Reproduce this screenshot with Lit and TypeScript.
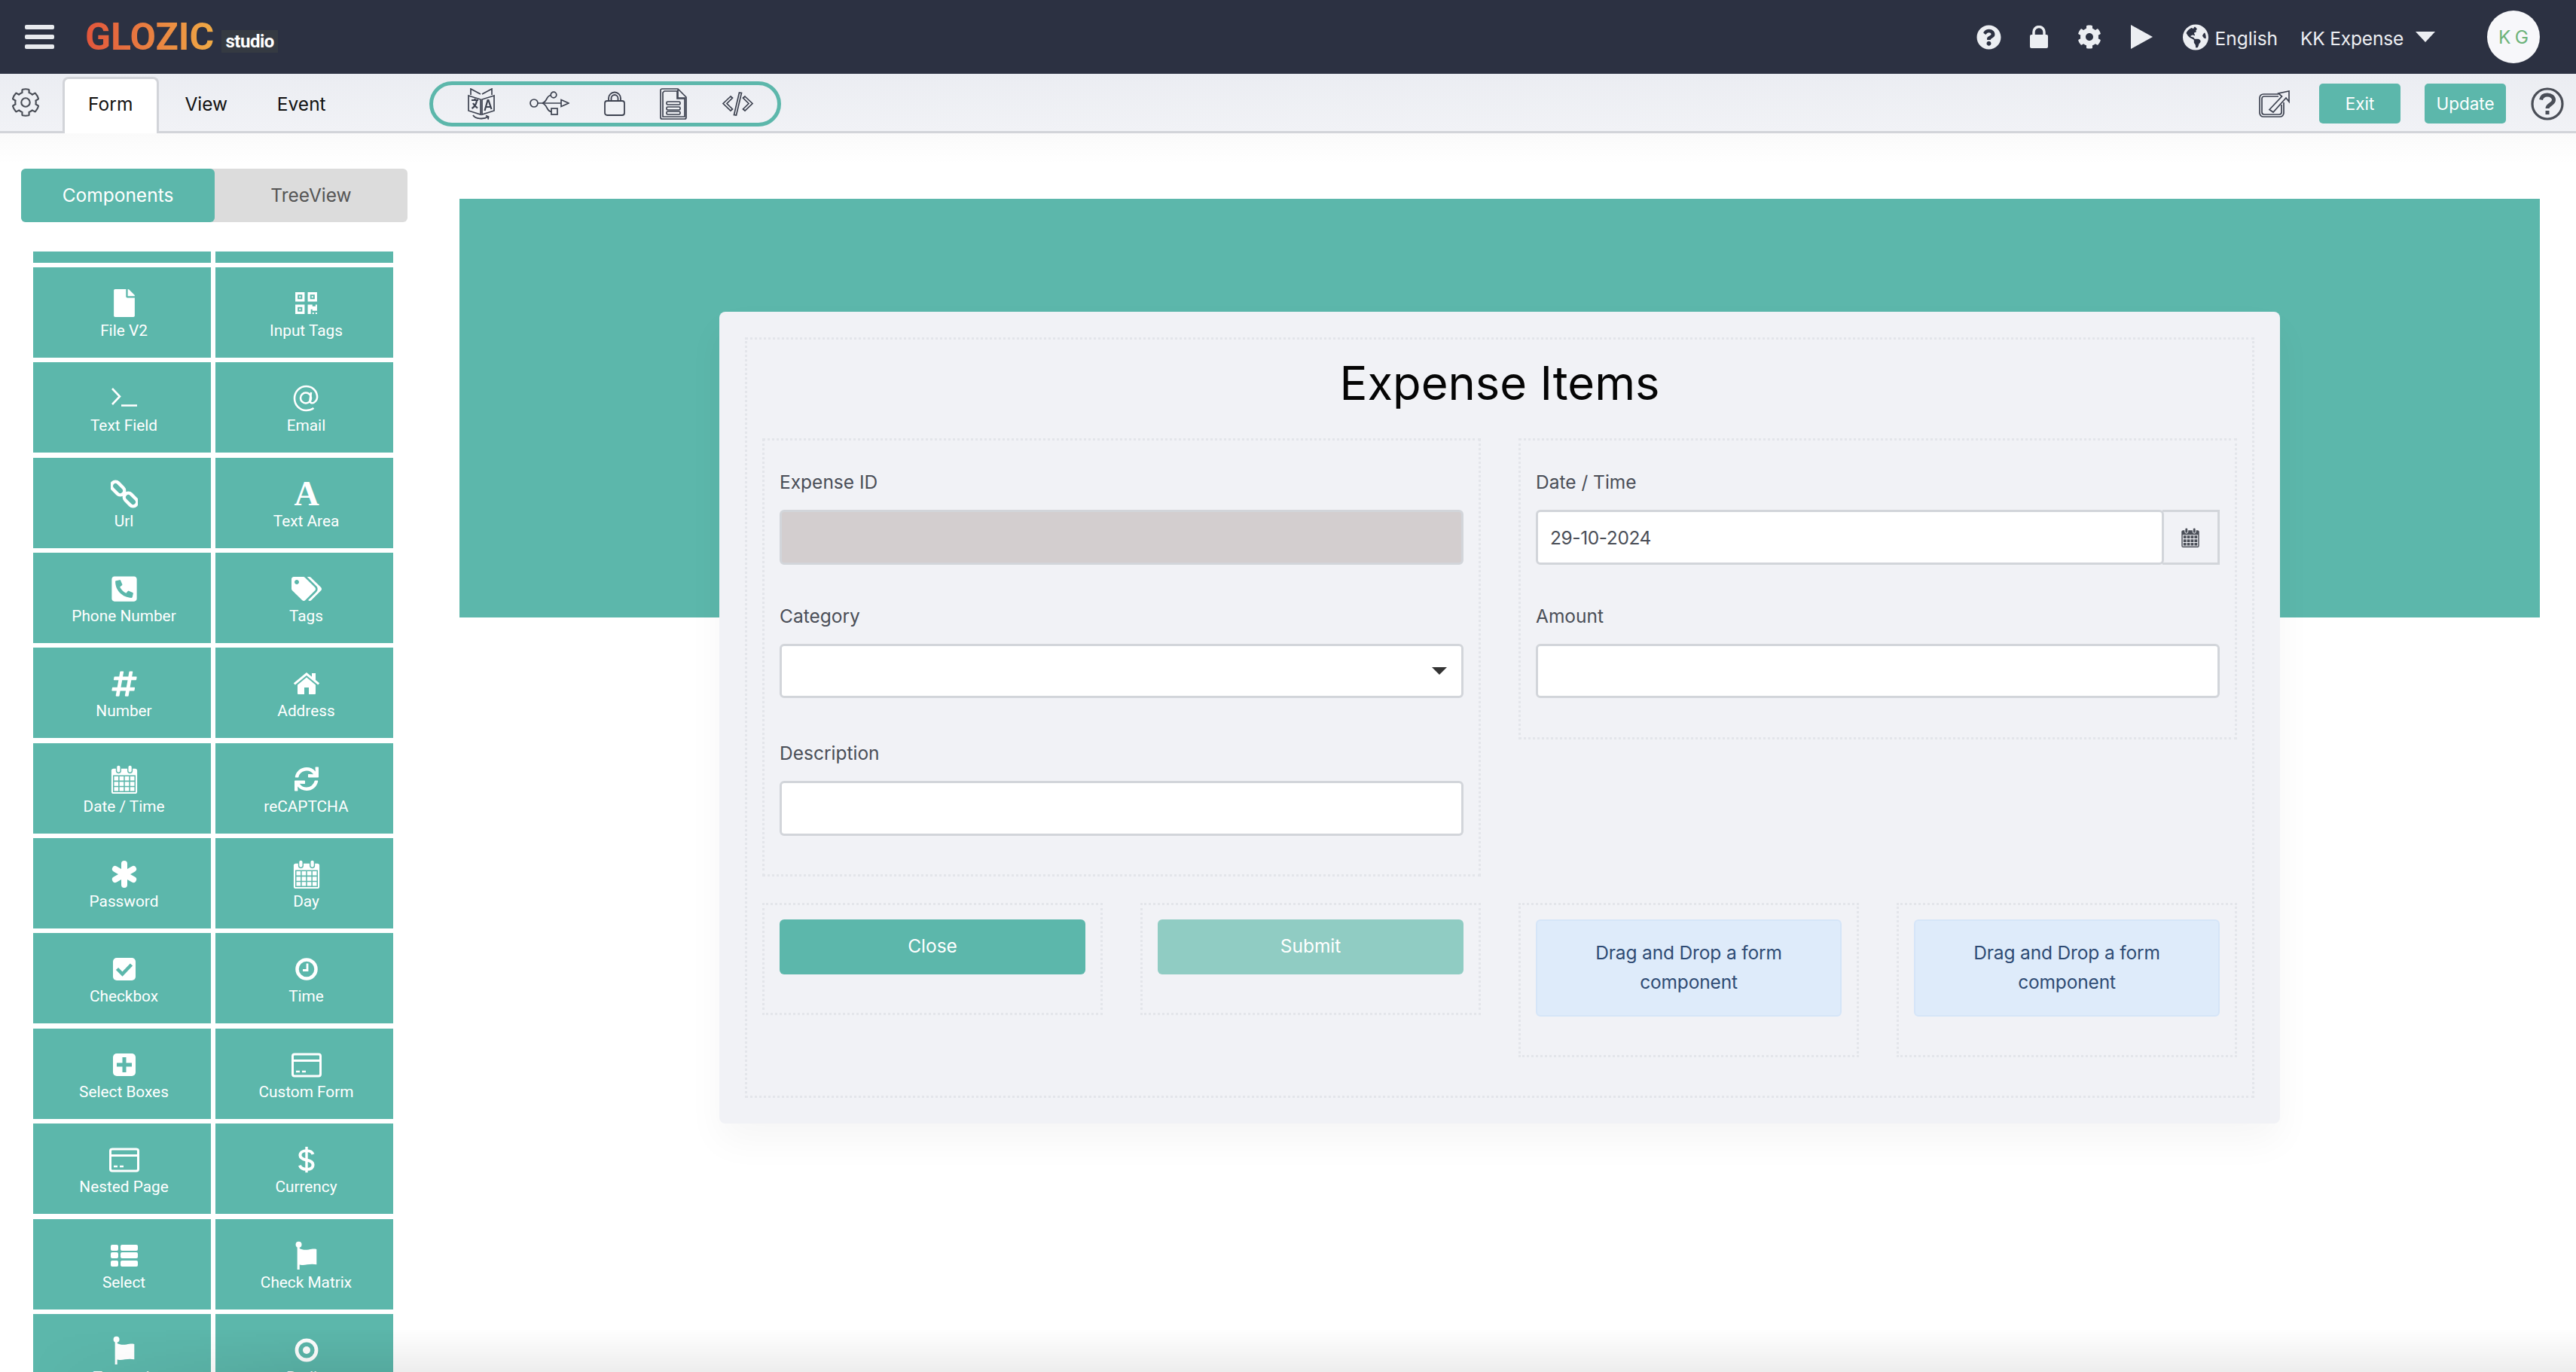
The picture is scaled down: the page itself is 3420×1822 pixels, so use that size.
import { LitElement, html, css, svg } from 'lit'
import { customElement } from 'lit/decorators.js'

const TEAL = '#5cb7ab'

// solid icons share one fill colour, the few cut-outs use --cut
const FILE = svg`<svg viewBox="0 0 384 512"><path d="M224 136V0H24C10.7 0 0 10.7 0 24v464c0 13.3 10.7 24 24 24h336c13.3 0 24-10.7 24-24V160H248c-13.2 0-24-10.8-24-24zm160-14.1v6.1H256V0h6.1c6.4 0 12.5 2.5 17 7l97.9 98c4.5 4.5 7 10.6 7 16.9z"/></svg>`
const QR = svg`<svg viewBox="0 0 448 512"><path d="M0 224h192V32H0v192zM48 80h96v96H48zM80 112h32v32H80zM256 32v192h192V32H256zM400 176h-96V80h96zM336 112h32v32h-32zM0 480h192V288H0v192zM48 336h96v96H48zM80 368h32v32H80zM416 288h32v128h-96v-32h-32v96h-64V288h96v32h64v-32zm0 160h32v32h-32v-32zm-64 0h32v32h-32v-32z" fill-rule="evenodd"/></svg>`
const TERMINAL = svg`<svg viewBox="0 0 36 36" fill="none" stroke="currentColor" stroke-width="2.600"><path d="M2 5l10 10.500L2 26"/><path d="M14 27.500h21"/></svg>`
const AT = svg`<svg viewBox="0 0 36 36" fill="none" stroke="currentColor" stroke-width="2.600"><circle cx="17" cy="17.500" r="7"/><path d="M24 10l-1.500 11c-.3 3 3 4.200 5.500 2.500 3-2 4.500-5.500 4-9C31 7 25 2 17.500 2 9 2 2 9 2 18s7 16 15.500 16c4 0 7-1 10-3"/></svg>`
const LINK = svg`<svg viewBox="0 0 36 36" fill="none" stroke="currentColor" stroke-width="4.400"><rect x="-.5" y="5" width="20" height="11" rx="5.500" transform="rotate(45 9.500 10.500)"/><rect x="16.500" y="20" width="20" height="11" rx="5.500" transform="rotate(45 26.500 25.500)"/></svg>`
const FONT_A = svg`<svg viewBox="0 0 36 36" overflow="visible"><text x="18" y="33" text-anchor="middle" font-family="Liberation Serif" font-weight="700" font-size="46">A</text></svg>`
const PHONE = svg`<svg viewBox="0 0 448 512"><path transform="translate(448 0) scale(-1 1)" d="M400 32H48C21.490 32 0 53.490 0 80v352c0 26.510 21.490 48 48 48h352c26.510 0 48-21.490 48-48V80c0-26.510-21.490-48-48-48zM94 416c-7.033 0-13.057-4.873-14.616-11.627l-14.998-65a15 15 0 0 1 8.707-17.160l69.998-29.999a15 15 0 0 1 17.518 4.289l30.997 37.885c48.944-22.963 88.297-62.858 110.781-110.780l-37.886-30.997a15.001 15.001 0 0 1-4.289-17.518l30-69.998a15.001 15.001 0 0 1 17.160-8.707l65 14.998A14.997 14.997 0 0 1 384 126c0 160.292-129.945 290-290 290z"/></svg>`
const TAGS = svg`<svg viewBox="0 0 640 512"><path d="M497.941 225.941L286.059 14.059A48 48 0 0 0 252.118 0H48C21.490 0 0 21.490 0 48v204.118a48 48 0 0 0 14.059 33.941l211.882 211.882c18.744 18.745 49.136 18.746 67.882 0l204.118-204.118c18.745-18.745 18.745-49.137 0-67.882zM112 160c-26.510 0-48-21.490-48-48s21.490-48 48-48 48 21.490 48 48-21.490 48-48 48zm513.941 133.823L421.823 497.941c-18.745 18.745-49.137 18.745-67.882 0l-.36-.36L527.640 323.522c16.999-16.999 26.360-39.600 26.360-63.640s-9.362-46.641-26.360-63.640L331.397 0h48.721a48 48 0 0 1 33.941 14.059l211.882 211.882c18.745 18.745 18.745 49.137 0 67.882z"/></svg>`
const HASH = svg`<svg viewBox="0 0 448 512"><path d="M440.667 182.109l7.143-40c1.313-7.355-4.342-14.109-11.813-14.109h-74.810l14.623-81.891C377.123 38.754 371.468 32 363.997 32h-40.632a12 12 0 0 0-11.813 9.891L296.175 128H197.540l14.623-81.891C213.477 38.754 207.822 32 200.350 32h-40.632a12 12 0 0 0-11.813 9.891L132.528 128H53.432a12 12 0 0 0-11.813 9.891l-7.143 40C33.163 185.246 38.818 192 46.289 192h74.810L98.242 320H19.146a12 12 0 0 0-11.813 9.891l-7.143 40C-1.123 377.246 4.532 384 12.003 384h74.810L72.190 465.891C70.877 473.246 76.532 480 84.003 480h40.632a12 12 0 0 0 11.813-9.891L151.826 384h98.634l-14.623 81.891C234.523 473.246 240.178 480 247.650 480h40.632a12 12 0 0 0 11.813-9.891L315.472 384h79.096a12 12 0 0 0 11.813-9.891l7.143-40c1.313-7.355-4.342-14.109-11.813-14.109h-74.810l22.857-128h79.096a12 12 0 0 0 11.813-9.891zM261.889 320h-98.634l22.857-128h98.634l-22.857 128z"/></svg>`
const HOME = svg`<svg viewBox="0 0 36 36"><path d="M18 9.500 6 19.500V31a1 1 0 0 0 1 1h8v-9h6v9h8a1 1 0 0 0 1-1V19.500z"/><path d="M18 3 .8 17.300l2 2.300L18 7l15.200 12.600 2-2.300L30 13V4h-5v4.800z"/></svg>`
const CALENDAR = svg`<svg viewBox="0 0 36 40"><rect x="0" y="5" width="36" height="35" rx="3"/><rect x="7" y="0" width="6" height="11" rx="3" stroke="var(--cut,${TEAL})" stroke-width="1.500"/><rect x="23" y="0" width="6" height="11" rx="3" stroke="var(--cut,${TEAL})" stroke-width="1.500"/><path fill="none" stroke="var(--cut,${TEAL})" stroke-width="1.600" d="M3 15h30v22H3zM3 22.500h30M3 30h30M10.500 15v22M18 15v22M25.500 15v22"/></svg>`
const SYNC = svg`<svg viewBox="0 0 512 512"><path d="M440.650 12.570l4 82.770A247.160 247.160 0 0 0 255.830 8C134.730 8 33.910 94.920 12.290 209.820A12 12 0 0 0 24.090 224h49.050a12 12 0 0 0 11.670-9.260 175.910 175.910 0 0 1 317-56.940l-101.460-4.860a12 12 0 0 0-12.570 12v47.410a12 12 0 0 0 12 12H500a12 12 0 0 0 12-12V12a12 12 0 0 0-12-12h-47.370a12 12 0 0 0-11.980 12.570zM255.830 432a175.610 175.610 0 0 1-146-77.800l101.800 4.870a12 12 0 0 0 12.570-12v-47.400a12 12 0 0 0-12-12H12a12 12 0 0 0-12 12V500a12 12 0 0 0 12 12h47.350a12 12 0 0 0 12-12.600l-4.150-82.570A247.170 247.170 0 0 0 255.830 504c121.110 0 221.930-86.920 243.550-201.820a12 12 0 0 0-11.800-14.180h-49.050a12 12 0 0 0-11.670 9.260A175.860 175.860 0 0 1 255.830 432z"/></svg>`
const ASTERISK = svg`<svg viewBox="0 0 36 36" fill="none" stroke="currentColor" stroke-width="8" stroke-linecap="round"><path d="M18 4v28M5.900 11l24.200 14M30.100 11 5.900 25"/></svg>`
const CHECK = svg`<svg viewBox="0 0 36 36"><rect x="3" y="3" width="30" height="30" rx="5"/><path fill="none" stroke="${TEAL}" stroke-width="4.500" d="M8.500 17.500l7 7L27.500 12"/></svg>`
const CLOCK = svg`<svg viewBox="0 0 36 36" fill="none" stroke="currentColor"><circle cx="18" cy="18" r="12.500" stroke-width="4.500"/><path stroke-width="2.800" d="M19 10.500V19.500h-6"/></svg>`
const PLUS = svg`<svg viewBox="0 0 36 36"><rect x="3" y="3" width="30" height="30" rx="5"/><path fill="none" stroke="${TEAL}" stroke-width="5" d="M18 8v20M8 18h20"/></svg>`
const CARD = svg`<svg viewBox="0 0 40 36" fill="none" stroke="currentColor"><rect x="1.500" y="4" width="37" height="29" rx="2.500" stroke-width="3"/><path stroke-width="3" d="M2 12.500h36"/><path stroke-width="2.400" d="M6 27h5M14 27h5"/></svg>`
const DOLLAR = svg`<svg viewBox="0 0 36 40" fill="none" stroke="currentColor"><path stroke-width="4.200" d="M27 12.500c-1-3-4.500-5-9-5-5.500 0-9 2.500-9 6.500 0 4 3.500 5.500 9 6.500s9 3 9 6.800c0 4-3.500 6.200-9 6.200-5 0-8.500-2-9.500-5.500"/><path stroke-width="3.600" d="M18 2v36"/></svg>`
const LIST = svg`<svg viewBox="0 0 36 36"><g><rect y="4" width="10" height="8" rx="2"/><rect y="14" width="10" height="8" rx="2"/><rect y="25" width="10" height="8" rx="2"/><rect x="13" y="4" width="23" height="8" rx="2"/><rect x="13" y="14" width="23" height="8" rx="2"/><rect x="13" y="25" width="23" height="8" rx="2"/></g></svg>`
const FLAG = svg`<svg viewBox="0 0 36 40"><circle cx="7" cy="5" r="4.200"/><rect x="5" y="6" width="3.200" height="34"/><path d="M7 10c5 2.500 9 3 14 2s8-1 11-.5V33c-4-1-8-1-13 0s-9 1-12-.5z"/></svg>`
const DOT = svg`<svg viewBox="0 0 36 36" fill="none" stroke="currentColor"><circle cx="18" cy="18" r="13" stroke-width="4.800"/><circle cx="18" cy="18" r="5" fill="currentColor" stroke="none"/></svg>`

const QUESTION = svg`<svg viewBox="0 0 512 512"><path d="M504 256c0 136.997-111.043 248-248 248S8 392.997 8 256C8 119.083 119.043 8 256 8s248 111.083 248 248zM262.655 90c-54.497 0-89.255 22.957-116.549 63.758-3.536 5.286-2.353 12.415 2.715 16.258l34.699 26.310c5.205 3.947 12.621 3.008 16.665-2.122 17.864-22.658 30.113-35.797 57.303-35.797 20.429 0 45.698 13.148 45.698 32.958 0 14.976-12.363 22.667-32.534 33.976C247.128 238.528 216 254.941 216 296v4c0 6.627 5.373 12 12 12h56c6.627 0 12-5.373 12-12v-1.333c0-28.462 83.186-29.647 83.186-106.667 0-58.002-60.165-102-116.531-102zM256 338c-25.365 0-46 20.635-46 46 0 25.364 20.635 46 46 46s46-20.636 46-46c0-25.365-20.635-46-46-46z"/></svg>`
const PADLOCK = svg`<svg viewBox="0 0 24 30"><path fill="none" stroke="currentColor" stroke-width="3.400" d="M5 14V8.500a7 7 0 0 1 14 0V14"/><rect y="12" width="24" height="18" rx="2"/></svg>`
const COG_D = 'M487.400 315.700l-42.600-24.600c4.300-23.200 4.300-47 0-70.200l42.600-24.600c4.900-2.800 7.100-8.600 5.500-14-11.100-35.600-30-67.800-54.700-94.600-3.800-4.100-10-5.100-14.800-2.300L380.800 110c-17.900-15.400-38.500-27.300-60.800-35.100V25.800c0-5.600-3.900-10.500-9.400-11.700-36.700-8.200-74.300-7.800-109.200 0-5.500 1.200-9.400 6.100-9.400 11.700V75c-22.200 7.900-42.800 19.800-60.800 35.100L88.700 85.500c-4.900-2.800-11-1.900-14.800 2.300-24.700 26.700-43.600 58.900-54.700 94.600-1.700 5.400.6 11.200 5.500 14L67.300 221c-4.300 23.200-4.300 47 0 70.200l-42.600 24.600c-4.900 2.800-7.100 8.600-5.500 14 11.100 35.600 30 67.800 54.700 94.600 3.800 4.100 10 5.100 14.800 2.300l42.600-24.600c17.900 15.400 38.500 27.300 60.800 35.100v49.200c0 5.600 3.900 10.500 9.400 11.700 36.700 8.200 74.300 7.800 109.200 0 5.500-1.200 9.400-6.100 9.400-11.700v-49.200c22.200-7.900 42.800-19.800 60.800-35.100l42.600 24.600c4.900 2.800 11 1.900 14.800-2.300 24.700-26.700 43.600-58.900 54.700-94.600 1.500-5.500-.7-11.300-5.600-14.100zM256 336c-44.100 0-80-35.900-80-80s35.900-80 80-80 80 35.900 80 80-35.900 80-80 80z'
const COG = svg`<svg viewBox="0 0 512 512"><path d="${COG_D}"/></svg>`
const COG_LINE = svg`<svg viewBox="-10 -10 532 532"><path fill="none" stroke="currentColor" stroke-width="30" d="${COG_D}"/></svg>`
const PLAY = svg`<svg viewBox="0 0 29 32"><path d="M0 0l29 16L0 32z"/></svg>`
const GLOBE = svg`<svg viewBox="0 0 496 512"><path d="M248 8C111.030 8 0 119.030 0 256s111.030 248 248 248 248-111.030 248-248S384.970 8 248 8zm82.290 357.600c-3.900 3.880-7.990 7.950-11.310 11.280-2.990 3-5.100 6.700-6.170 10.710-1.510 5.660-2.730 11.380-4.770 16.870l-17.390 46.850c-13.760 3-28 4.690-42.650 4.690v-27.380c1.690-12.620-7.640-36.260-22.630-51.250-6-6-9.370-14.140-9.370-22.630v-32.010c0-11.640-6.270-22.340-16.460-27.970-14.370-7.950-34.810-19.060-48.810-26.110-11.480-5.780-22.100-13.140-31.650-21.750l-.8-.72a114.792 114.792 0 0 1-18.060-20.740c-9.380-13.770-24.660-36.420-34.590-51.140 20.470-45.500 57.360-82.040 103.200-101.890l24.010 12.010C203.480 89.740 216 82.010 216 70.110v-11.300c7.990-1.290 16.120-2.110 24.390-2.420l28.300 28.300c6.250 6.250 6.250 16.380 0 22.630L264 112l-10.340 10.340c-3.120 3.120-3.120 8.190 0 11.310l4.690 4.690c3.120 3.120 3.120 8.190 0 11.310l-8 8a8.008 8.008 0 0 1-5.660 2.340h-8.990c-2.080 0-4.080.81-5.580 2.270l-9.920 9.650a8.008 8.008 0 0 0-1.580 9.310l15.590 31.190c2.660 5.320-1.210 11.580-7.150 11.580h-5.640c-1.930 0-3.790-.7-5.240-1.960l-9.280-8.060a16.017 16.017 0 0 0-15.550-3.100l-31.170 10.390a11.950 11.950 0 0 0-8.170 11.340c0 4.530 2.560 8.660 6.610 10.690l11.080 5.540c9.410 4.710 19.790 7.160 30.310 7.160s22.590 27.290 32 32h66.750c8.490 0 16.620 3.370 22.630 9.370l13.690 13.690a30.503 30.503 0 0 1 8.930 21.570 46.536 46.536 0 0 1-13.720 32.980zM417 274.250c-5.790-1.450-10.840-5-14.150-9.970l-17.980-26.970a23.970 23.970 0 0 1 0-26.620l19.590-29.380c2.320-3.470 5.500-6.290 9.240-8.150l12.980-6.490C440.200 193.590 448 223.870 448 256c0 8.670-.74 17.160-1.820 25.540L417 274.250z"/></svg>`

const TRANSLATE = svg`<svg viewBox="0 0 36 42" fill="none" stroke="currentColor" stroke-width="1.700"><path d="M1 10l16 5v20L1 30zM35 10l-16 5v20l16-5zM4 9V1l13 7M32 9V1L19 8"/><path stroke-width="2.200" d="M5 16h9M9.500 14v3M12 17c-1 5-3 8-6.500 10M7 20c1.500 3 3.500 5 6 6.500"/><path stroke-width="2.200" d="M22.500 30l4-14h1l4 12M24 25h6"/><path stroke-width="1.800" d="M7 36c3 5 14 6 20 2M24 36.500l3.500 1.500-.5 3.500"/></svg>`
const USB = svg`<svg viewBox="0 0 53 33" fill="none" stroke="currentColor" stroke-width="1.700"><circle cx="6" cy="16" r="5"/><path d="M11 16h31M42 11.500 52 16l-10 4.500z"/><path d="M17 16c3-1 4-2 6-6 1.500-3 3-4.500 6-4.500"/><circle cx="32" cy="5" r="3.800"/><path d="M17 16c3 1 4 2 6 6 1.500 3 3 5 6 5.500"/><rect x="29" y="23" width="8" height="8"/></svg>`
const LOCK_LINE = svg`<svg viewBox="0 0 28 33" fill="none" stroke="currentColor" stroke-width="1.800"><rect x="1" y="13" width="26" height="19" rx="3"/><path d="M6 13V9.500a8 8 0 0 1 16 0V13M9.500 13V9.500a4.500 4.500 0 0 1 9 0V13"/></svg>`
const DOC = svg`<svg viewBox="0 0 36 42" fill="none" stroke="currentColor" stroke-width="1.700"><path d="M3 1h21l11 11v27a2 2 0 0 1-2 2H3a2 2 0 0 1-2-2V3a2 2 0 0 1 2-2z"/><path d="M6 4h17v10h10v24H4V6z"/><path d="M24 2v11h10"/><rect x="9" y="18" width="18" height="4" rx="1.500"/><rect x="9" y="25" width="18" height="4" rx="1.500"/><rect x="9" y="31" width="18" height="4" rx="1.500"/></svg>`
const CODE = svg`<svg viewBox="0 0 43 32" fill="none" stroke="currentColor" stroke-width="1.700"><path d="M12 6 2 15.500 12 25l2.500-2-7.500-7.500L14.500 8zM31 6l10 9.500L31 25l-2.500-2 7.500-7.500L28.500 8zM23.500 1l3 .5-7 29.500-3-.5z"/></svg>`
const EXTERNAL = svg`<svg viewBox="0 0 41 36" fill="none" stroke="currentColor" stroke-width="1.700"><path d="M26 5H6a5 5 0 0 0-5 5v20a5 5 0 0 0 5 5h22a5 5 0 0 0 5-5V16"/><path d="M26 8H7a3 3 0 0 0-3 3v18a3 3 0 0 0 3 3h20a3 3 0 0 0 3-3V19"/><path d="M14 25.500 30.500 8 26 4 40 1v14l-4-5-17 19z"/></svg>`
const HELP_LINE = svg`<svg viewBox="0 0 44 44"><circle cx="22" cy="22" r="20" fill="none" stroke="currentColor" stroke-width="3.200"/><path fill="none" stroke="currentColor" stroke-width="5" d="M13.500 16.500c1-4.500 4.500-6.500 8.500-6.500 5 0 8.500 3 8.500 6.800 0 5.700-8.500 6-8.500 11.200"/><rect x="19.500" y="31" width="5" height="5" fill="currentColor"/></svg>`

const COMPONENTS: [any, string, string?][] = [
  [FILE, 'File V2', 'i-36'], [QR, 'Input Tags', 'i-32'],
  [TERMINAL, 'Text Field'], [AT, 'Email'],
  [LINK, 'Url'], [FONT_A, 'Text Area'],
  [PHONE, 'Phone Number'], [TAGS, 'Tags', 'i-wide'],
  [HASH, 'Number'], [HOME, 'Address'],
  [CALENDAR, 'Date / Time'], [SYNC, 'reCAPTCHA', 'i-34'],
  [ASTERISK, 'Password'], [CALENDAR, 'Day'],
  [CHECK, 'Checkbox'], [CLOCK, 'Time'],
  [PLUS, 'Select Boxes'], [CARD, 'Custom Form', 'i-wide'],
  [CARD, 'Nested Page', 'i-wide'], [DOLLAR, 'Currency'],
  [LIST, 'Select'], [FLAG, 'Check Matrix'],
  [FLAG, 'Transmit'], [DOT, 'Radio']
]

@customElement('app-root')
export class AppRoot extends LitElement {
  static styles = css`
    * {
      box-sizing: border-box;
    }
    :host {
      display: block;
      position: relative;
      height: 100vh;
      overflow: hidden;
      background: #fff;
      font-family: Inter, 'Liberation Sans', sans-serif;
      font-size: 24.500px;
      color: #4a4e57;
    }
    svg {
      display: block;
    }
    svg:not([fill]) {
      fill: currentColor;
    }

    .header {
      display: flex;
      align-items: center;
      height: 98px;
      padding: 0 48px 0 33px;
      background: #2c3142;
      color: #eceef2;
    }
    .burger {
      display: flex;
      flex-direction: column;
      gap: 6.500px;
      width: 39px;
    }
    .burger span {
      height: 6.500px;
      border-radius: 2px;
      background: #e8eaee;
    }
    .logo {
      margin-left: 41px;
      font: 700 50px/1 Roboto, sans-serif;
      background: linear-gradient(90deg, #e2553c, #f0aa45);
      -webkit-background-clip: text;
      background-clip: text;
      color: transparent;
    }
    .studio {
      display: flex;
      align-items: center;
      justify-content: center;
      width: 75px;
      height: 30px;
      margin: 12px 0 0 10px;
      background: #353a42;
      color: #fff;
      font: 700 24px/1 Roboto, sans-serif;
      letter-spacing: -0.500px;
    }
    .top-right {
      display: flex;
      align-items: center;
      margin-left: auto;
    }
    .top-right svg {
      flex: none;
    }
    .top-q { width: 33px; height: 33px; }
    .top-lock { width: 24px; height: 30px; margin-left: 38px; }
    .top-cog { width: 32px; height: 32px; margin-left: 39px; }
    .top-play { width: 29px; height: 32px; margin-left: 39px; }
    .top-globe { width: 34px; height: 35px; margin-left: 40px; }
    .lang { margin: 3px 0 0 9px; }
    .company { margin: 3px 0 0 30px; letter-spacing: -0.200px; }
    .caret {
      width: 0;
      height: 0;
      margin-left: 16px;
      border-left: 13.500px solid transparent;
      border-right: 13.500px solid transparent;
      border-top: 14px solid #eceef2;
    }
    .avatar {
      display: flex;
      align-items: center;
      justify-content: center;
      width: 70px;
      height: 70px;
      margin-left: 69px;
      border-radius: 50%;
      background: #f7f7fa;
      color: #6db37a;
      letter-spacing: 6px;
      text-indent: 6px;
    }

    .toolbar {
      display: flex;
      align-items: center;
      height: 79px;
      padding: 3px 16px 0 15px;
      background: linear-gradient(#ebedf2, #f1f2f6);
      border-bottom: 3px solid #d2d4d9;
      color: #3d4250;
    }
    .settings {
      width: 38px;
      height: 38px;
      flex: none;
      margin-top: -4px;
      color: #4a4e57;
    }
    .tabs {
      display: flex;
      align-self: flex-end;
      margin: 0 0 -3px 30px;
    }
    .tab {
      display: flex;
      align-items: center;
      justify-content: center;
      width: 126.500px;
      height: 75px;
      padding-bottom: 3px;
      color: #111;
    }
    .tab.active {
      width: 127.500px;
      padding-bottom: 6px;
      background: #fff;
      border: 3px solid #d2d4d9;
      border-bottom: 0;
      border-radius: 8px 8px 0 0;
    }
    .pill {
      display: flex;
      align-items: center;
      gap: 46px;
      width: 467px;
      height: 60px;
      margin-left: 106px;
      padding-left: 46px;
      border: 5px solid #5cb7ab;
      border-radius: 30px;
    }
    .p-translate { width: 36px; height: 42px; }
    .p-usb { width: 53px; height: 33px; }
    .p-lock { width: 28px; height: 33px; }
    .p-doc { width: 36px; height: 42px; }
    .p-code { width: 43px; height: 32px; }
    .tool-right {
      display: flex;
      align-items: center;
      margin-left: auto;
    }
    .ext { width: 41px; height: 36px; margin-right: 39px; }
    .action {
      display: flex;
      align-items: center;
      justify-content: center;
      width: 108px;
      height: 53px;
      margin-right: 32px;
      border-radius: 5px;
      background: #5cb7ab;
      color: #fff;
      font-size: 22.500px;
    }
    .help { width: 44px; height: 44px; flex: none; margin-left: 1px; color: #4a4e57; }

    .body {
      display: grid;
      grid-template-columns: 610px 1fr;
      background: linear-gradient(#fafafa, #fff 41px);
    }
    .side {
      padding: 47px 0 0 28px;
    }
    .side-tabs {
      display: grid;
      grid-template-columns: 257px 256px;
      width: 513px;
      height: 71px;
      border-radius: 6px;
      background: #dcdcdc;
      color: #555;
    }
    .side-tabs div {
      display: flex;
      align-items: center;
      justify-content: center;
      padding-bottom: 2px;
    }
    .side-tabs .on {
      border-radius: 6px;
      background: #5cb7ab;
      color: #fff;
    }
    .palette {
      display: grid;
      grid-template-columns: 236px 236px;
      grid-template-rows: 14.600px;
      grid-auto-rows: 120px;
      column-gap: 6px;
      row-gap: 6.360px;
      margin: 39px 0 0 16px;
      font-family: Roboto, sans-serif;
      font-size: 20.800px;
    }
    .stub {
      background: #5cb7ab;
    }
    .cell {
      display: flex;
      flex-direction: column;
      align-items: center;
      padding: 28px 0 0 5px;
      background: #5cb7ab;
      color: #fff;
    }
    .cell .ic {
      display: flex;
      align-items: center;
      justify-content: center;
      height: 40px;
    }
    .cell .ic svg {
      width: 36px;
      height: 38px;
    }
    .cell .ic.i-wide svg { width: 40px; height: 36px; }
    .cell .ic.i-36 svg { width: 32px; height: 37px; }
    .cell .ic.i-32 svg { width: 29px; height: 33px; }
    .cell .ic.i-34 svg { width: 32px; height: 33px; }
    .cell .lb {
      padding-top: 1px;
      line-height: 30px;
      white-space: nowrap;
    }

    .canvas {
      padding: 87px 48px 0 0;
    }
    .banner {
      height: 556px;
      background: #5cb7ab;
    }
    .card {
      position: relative;
      width: 2072px;
      height: 1078px;
      margin: -406px 0 0 345px;
      padding: 34px;
      border-radius: 8px;
      background: #f1f2f6;
      box-shadow: 0 24px 50px rgba(0, 0, 0, 0.04);
    }
    .outer,
    .box {
      border: 3px dotted #e3e5ea;
    }
    .outer {
      padding: 0 20px 51px;
    }
    .title {
      margin: 19px 0 35px;
      font-size: 61.500px;
      font-weight: 400;
      line-height: 77px;
      text-align: center;
      color: #050505;
    }
    .cols {
      display: grid;
      grid-template-columns: 1fr 1fr;
      gap: 50px;
      align-items: start;
    }
    .box {
      padding: 37px 20px 52px;
    }
    .field + .field {
      margin-top: 50px;
    }
    .field + .field.far {
      margin: 55px 0 -1px;
    }
    .label {
      display: block;
      height: 36px;
      margin-bottom: 19px;
      line-height: 36px;
    }
    .input {
      display: flex;
      align-items: center;
      height: 73px;
      padding: 0 16px;
      border: 3px solid #d2d5da;
      border-radius: 6px;
      background: #fff;
      letter-spacing: -0.400px;
    }
    .input.off {
      background: #d3cecf;
    }
    .input.select {
      justify-content: flex-end;
      height: 72px;
    }
    .drop {
      width: 0;
      height: 0;
      margin-right: 3px;
      border-left: 10px solid transparent;
      border-right: 10px solid transparent;
      border-top: 10px solid #333;
    }
    .group {
      display: flex;
      height: 73px;
    }
    .group .input {
      flex: 1;
      z-index: 1;
    }
    .addon {
      display: flex;
      align-items: center;
      justify-content: center;
      width: 76px;
      margin-left: -2px;
      border: 3px solid #d2d5da;
      border-left: 0;
      color: #4a4e57;
      --cut: #f1f2f6;
    }
    .addon svg {
      width: 24px;
      height: 26px;
    }
    .row {
      display: grid;
      grid-template-columns: repeat(4, 1fr);
      gap: 50px;
      align-items: start;
      margin-top: 35px;
    }
    .row .box {
      padding: 19px 20px 51px;
    }
    .btn {
      display: flex;
      align-items: center;
      justify-content: center;
      height: 73px;
      padding-bottom: 3px;
      border-radius: 6px;
      background: #5cb7ab;
      color: #fff;
    }
    .btn.off {
      background: #90ccc3;
    }
    .drop-note {
      display: flex;
      align-items: center;
      justify-content: center;
      height: 129px;
      padding: 0 40px 2px;
      border: 2px solid #d5e5f8;
      border-radius: 6px;
      background: #deebfa;
      color: #2f4b74;
      line-height: 39px;
      text-align: center;
      letter-spacing: -0.150px;
    }
    .fade {
      position: absolute;
      left: 0;
      right: 0;
      bottom: 0;
      height: 58px;
      background: linear-gradient(rgba(0, 0, 0, 0), rgba(0, 0, 0, 0.07));
      -webkit-mask-image: linear-gradient(90deg, transparent 40px, #000 400px);
      mask-image: linear-gradient(90deg, transparent 40px, #000 400px);
      pointer-events: none;
    }
  `

  renderField(label: string, body: unknown, far = false) {
    return html`<div class="field ${far ? 'far' : ''}">
      <span class="label">${label}</span>
      ${body}
    </div>`
  }

  render() {
    return html`
      <div class="header">
        <div class="burger"><span></span><span></span><span></span></div>
        <div class="logo">GLOZIC</div>
        <div class="studio">studio</div>
        <div class="top-right">
          <span class="top-q">${QUESTION}</span>
          <span class="top-lock">${PADLOCK}</span>
          <span class="top-cog">${COG}</span>
          <span class="top-play">${PLAY}</span>
          <span class="top-globe">${GLOBE}</span>
          <span class="lang">English</span>
          <span class="company">KK Expense</span>
          <span class="caret"></span>
          <div class="avatar">KG</div>
        </div>
      </div>

      <div class="toolbar">
        <span class="settings">${COG_LINE}</span>
        <div class="tabs">
          <div class="tab active">Form</div>
          <div class="tab">View</div>
          <div class="tab">Event</div>
        </div>
        <div class="pill">
          <span class="p-translate">${TRANSLATE}</span>
          <span class="p-usb">${USB}</span>
          <span class="p-lock">${LOCK_LINE}</span>
          <span class="p-doc">${DOC}</span>
          <span class="p-code">${CODE}</span>
        </div>
        <div class="tool-right">
          <span class="ext">${EXTERNAL}</span>
          <div class="action">Exit</div>
          <div class="action">Update</div>
          <span class="help">${HELP_LINE}</span>
        </div>
      </div>

      <div class="body">
        <aside class="side">
          <div class="side-tabs">
            <div class="on">Components</div>
            <div>TreeView</div>
          </div>
          <div class="palette">
            <div class="stub"></div>
            <div class="stub"></div>
            ${COMPONENTS.map(
              ([icon, label, size]) => html`<div class="cell">
                <span class="ic ${size ?? ''}">${icon}</span>
                <span class="lb">${label}</span>
              </div>`
            )}
          </div>
        </aside>

        <main class="canvas">
          <div class="banner"></div>
          <section class="card">
            <div class="outer">
              <h1 class="title">Expense Items</h1>
              <div class="cols">
                <div class="box">
                  ${this.renderField('Expense ID', html`<div class="input off"></div>`)}
                  ${this.renderField('Category', html`<div class="input select"><span class="drop"></span></div>`)}
                  ${this.renderField('Description', html`<div class="input"></div>`, true)}
                </div>
                <div class="box">
                  ${this.renderField(
                    'Date / Time',
                    html`<div class="group">
                      <div class="input">29-10-2024</div>
                      <div class="addon">${CALENDAR}</div>
                    </div>`
                  )}
                  ${this.renderField('Amount', html`<div class="input select"></div>`)}
                </div>
              </div>
              <div class="row">
                <div class="box"><div class="btn">Close</div></div>
                <div class="box"><div class="btn off">Submit</div></div>
                <div class="box"><div class="drop-note">Drag and Drop a form component</div></div>
                <div class="box"><div class="drop-note">Drag and Drop a form component</div></div>
              </div>
            </div>
          </section>
        </main>
      </div>
      <div class="fade"></div>
    `
  }
}
